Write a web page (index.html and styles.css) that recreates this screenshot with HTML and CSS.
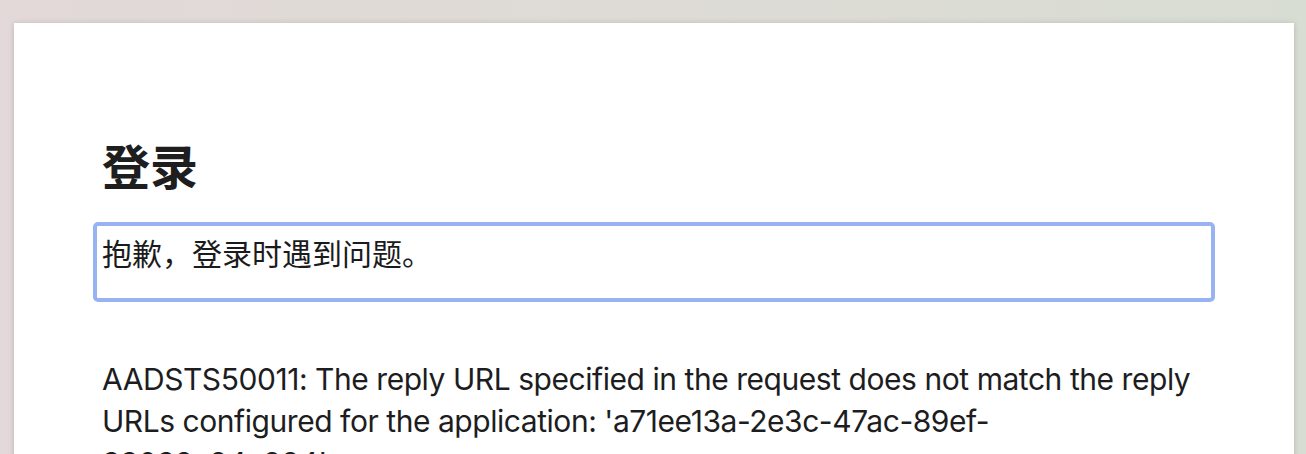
FILE: index.html
```html
<!DOCTYPE html>
<html lang="zh-CN">
<head>
<meta charset="utf-8">
<title>登录</title>
<link rel="stylesheet" href="styles.css">
</head>
<body>
<main class="card">
  <h1 class="title">登录</h1>
  <div class="alert" tabindex="0">抱歉，登录时遇到问题。</div>
  <p class="detail">AADSTS50011: The reply URL specified in the request does not match the reply URLs configured for the application: 'a71ee13a-2e3c-47ac-89ef-33032c94c994'.</p>
</main>
</body>
</html>
```
FILE: styles.css
```css
html, body {
  margin: 0;
  padding: 0;
  height: 100%;
  overflow: hidden;
}
body {
  background: linear-gradient(90deg, #e2d9d8 0%, #dedbd6 50%, #d8ddd3 100%);
  font-family: "Inter", "Noto Sans CJK SC", sans-serif;
  color: #1d1d1f;
  padding: 23px 12px 0 14px;
  box-sizing: border-box;
}
.card {
  background: #ffffff;
  width: 1280px;
  min-height: 700px;
  box-sizing: border-box;
  padding: 117px 88px 40px 88px;
  box-shadow: 0 0 6px rgba(0, 0, 0, 0.12), 0 2px 4px rgba(0, 0, 0, 0.06);
}
.title {
  margin: 0;
  font-size: 48px;
  line-height: 56px;
  font-weight: 700;
  color: #1e1e1e;
}
.alert {
  margin: 26px -9px 0 -9px;
  border: 4px solid #98b3f1;
  border-radius: 5px;
  padding: 7px 5px 23px 5px;
  font-size: 30px;
  line-height: 42px;
  color: #1b1b1b;
  outline: none;
}
.detail {
  margin: 56px 0 0 0;
  font-size: 30px;
  line-height: 42px;
  letter-spacing: -0.45px;
  color: #1d1d1f;
}
```
